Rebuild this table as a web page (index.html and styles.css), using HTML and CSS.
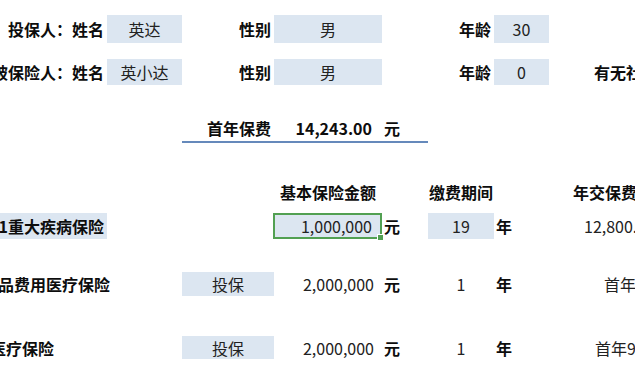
FILE: index.html
```html
<!DOCTYPE html>
<html lang="zh-CN">
<head>
<meta charset="utf-8">
<title>保费计算</title>
<link rel="stylesheet" href="styles.css">
</head>
<body>
<div class="sheet">
  <!-- row 1 -->
  <div class="c r1 ca lbl end">投保人：姓名</div>
  <div class="c r1 cb box mid">英达</div>
  <div class="c r1 cc lbl end">性别</div>
  <div class="c r1 cd box mid">男</div>
  <div class="c r1 cf lbl end">年龄</div>
  <div class="c r1 cg box mid">30</div>

  <!-- row 2 -->
  <div class="c r2 ca lbl end">被保险人：姓名</div>
  <div class="c r2 cb box mid">英小达</div>
  <div class="c r2 cc lbl end">性别</div>
  <div class="c r2 cd box mid">男</div>
  <div class="c r2 cf lbl end">年龄</div>
  <div class="c r2 cg box mid">0</div>
  <div class="c r2 ch lbl pad-h2">有无社保</div>

  <!-- premium row -->
  <div class="c r3 cc prem lbl end">首年保费</div>
  <div class="c r3 cd prem lbl end num">14,243.00</div>
  <div class="c r3 ce prem lbl unit">元</div>

  <!-- headers -->
  <div class="c r4 cd lbl mid">基本保险金额</div>
  <div class="c r4 cf lbl mid">缴费期间</div>
  <div class="c r4 ch lbl pad-hh">年交保费</div>

  <!-- product 1 -->
  <div class="c r5 ca box lbl end">1重大疾病保险</div>
  <div class="c r5 cd box sel end num">1,000,000<span class="handle"></span></div>
  <div class="c r5 ce lbl unit">元</div>
  <div class="c r5 cf box mid">19</div>
  <div class="c r5 cg lbl unit">年</div>
  <div class="c r5 ch pad-p1">12,800.00</div>

  <!-- product 2 -->
  <div class="c r6 ca lbl end w110">品费用医疗保险</div>
  <div class="c r6 cc box mid">投保</div>
  <div class="c r6 cd end num">2,000,000</div>
  <div class="c r6 ce lbl unit">元</div>
  <div class="c r6 cf mid">1</div>
  <div class="c r6 cg lbl unit">年</div>
  <div class="c r6 ch pad-p2">首年免费</div>

  <!-- product 3 -->
  <div class="c r7 ca lbl end w54">医疗保险</div>
  <div class="c r7 cc box mid">投保</div>
  <div class="c r7 cd end num">2,000,000</div>
  <div class="c r7 ce lbl unit">元</div>
  <div class="c r7 cf mid">1</div>
  <div class="c r7 cg lbl unit">年</div>
  <div class="c r7 ch pad-p3">首年99元</div>
</div>
</body>
</html>
```

FILE: styles.css
```css
html, body {
  margin: 0;
  padding: 0;
  background: #ffffff;
  overflow: hidden;
}

body {
  width: 635px;
  height: 369px;
  font-family: "Noto Sans CJK SC", "Noto Sans", sans-serif;
  font-size: 16px;
  color: #222222;
}

.sheet {
  display: grid;
  grid-template-columns: 107px 75px 92px 108px 46px 66px 55px 86px;
  grid-template-rows: 15px 28px 16px 26px 32px 26px 37px 24px 9px 26px 33px 24px 40px 23px;
  width: 635px;
  overflow: hidden;
}

.c {
  display: flex;
  align-items: center;
  white-space: nowrap;
  min-width: 0;
  line-height: 1;
}

/* rows */
.r1 { grid-row: 2; }
.r2 { grid-row: 4; }
.r3 { grid-row: 6; }
.r4 { grid-row: 8; }
.r5 { grid-row: 10; }
.r6 { grid-row: 12; }
.r7 { grid-row: 14; }

/* columns */
.ca { grid-column: 1; }
.cb { grid-column: 2; }
.cc { grid-column: 3; }
.cd { grid-column: 4; }
.ce { grid-column: 5; }
.cf { grid-column: 6; }
.cg { grid-column: 7; }
.ch { grid-column: 8; }

.lbl {
  font-weight: 700;
  color: #0d0d0d;
}

.box {
  background: #dce6f1;
}

.mid { justify-content: center; }

.end {
  justify-content: flex-end;
  padding-right: 3px;
}

.num.end { padding-right: 8px; }

.unit {
  padding-left: 2px;
}

.prem {
  border-bottom: 2px solid #6589bb;
  padding-bottom: 2px;
}

.prem.num {
  padding-right: 10px;
}

.sel {
  position: relative;
  border: 2px solid #52a052;
  margin-left: -1px;
  padding-right: 6px;
}

.handle {
  position: absolute;
  right: -4px;
  bottom: -4px;
  width: 5px;
  height: 5px;
  background: #52a052;
  border: 1px solid #ffffff;
}

.w110 { width: 110px; padding-right: 0; justify-self: start; box-sizing: border-box; }
.w54 { width: 54px; padding-right: 0; justify-self: start; box-sizing: border-box; }

.pad-h2 { padding-left: 45px; }
.pad-hh { padding-left: 24px; }
.pad-p1 { padding-left: 35px; }
.pad-p2 { padding-left: 55px; }
.pad-p3 { padding-left: 46px; }
```
